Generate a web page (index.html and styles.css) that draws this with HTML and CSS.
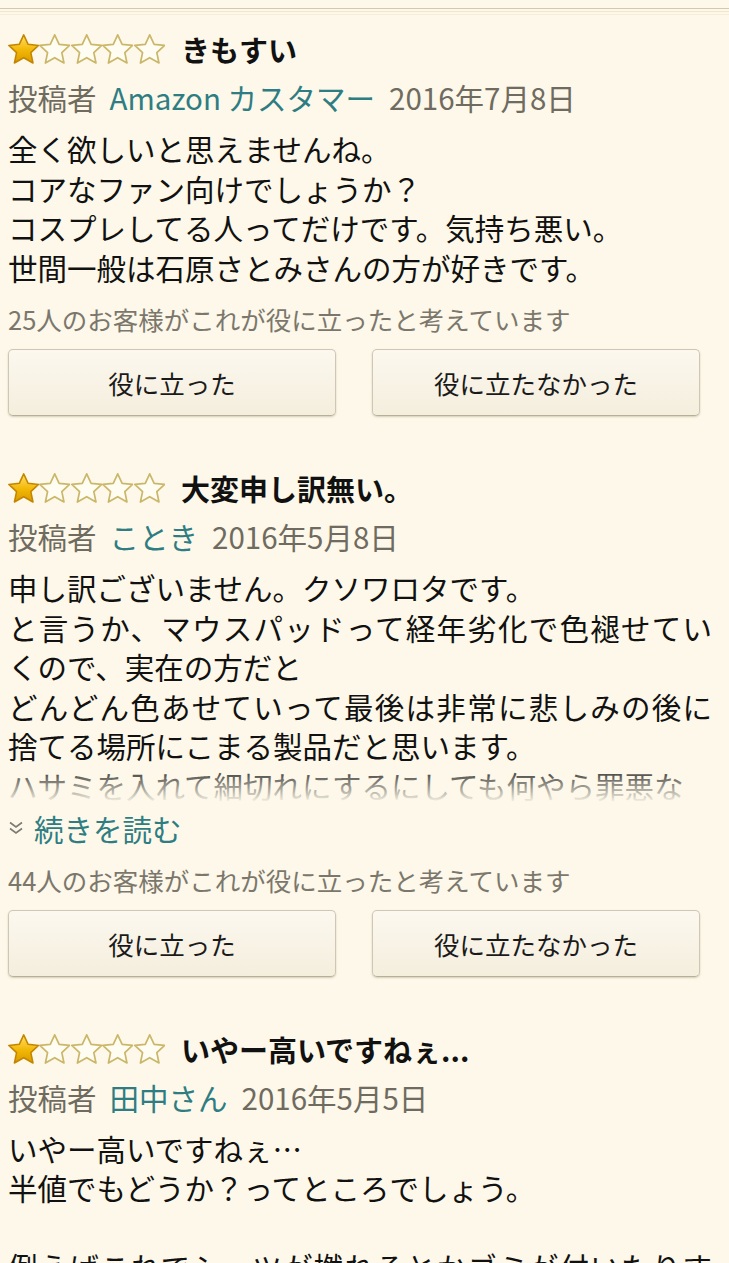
FILE: index.html
```html
<!DOCTYPE html>
<html lang="ja">
<head>
  <meta charset="UTF-8" />
  <meta name="viewport" content="width=device-width, initial-scale=1.0" />
  <title>カスタマーレビュー</title>
  <link rel="stylesheet" href="styles.css">
</head>
<body>
  <!-- star shapes used by every rating row -->
  <svg class="defs" width="0" height="0" aria-hidden="true">
    <defs>
      <linearGradient id="gold" x1="0" y1="0" x2="0" y2="1">
        <stop offset="0" stop-color="#ffe066" />
        <stop offset="0.55" stop-color="#f2b705" />
        <stop offset="1" stop-color="#d99a00" />
      </linearGradient>
      <symbol id="star-full" viewBox="1 1.1 22 20.8">
        <polygon points="12,1.6 15.1,8.2 22.4,9 17,14 18.5,21.3 12,17.6 5.5,21.3 7,14 1.6,9 8.9,8.2" fill="url(#gold)" stroke="#c48600" stroke-width="1.1" stroke-linejoin="round" />
      </symbol>
      <symbol id="star-empty" viewBox="1 1.1 22 20.8">
        <polygon points="12,1.6 15.1,8.2 22.4,9 17,14 18.5,21.3 12,17.6 5.5,21.3 7,14 1.6,9 8.9,8.2" fill="#fffcf2" stroke="#cbb769" stroke-width="1.2" stroke-linejoin="round" />
      </symbol>
    </defs>
  </svg>

  <div class="rule"></div>

  <div class="page">
    <!-- レビュー 1 -->
    <div class="review">
      <div class="title-row">
        <span class="stars">
          <svg><use href="#star-full" /></svg><svg><use href="#star-empty" /></svg><svg><use href="#star-empty" /></svg><svg><use href="#star-empty" /></svg><svg><use href="#star-empty" /></svg>
        </span>
        <span class="title">きもすい</span>
      </div>
      <div class="meta">投稿者<span class="author">Amazon カスタマー</span><span class="date">2016年7月8日</span></div>
      <p class="text">全く欲しいと思えませんね。<br>コアなファン向けでしょうか？<br>コスプレしてる人ってだけです。気持ち悪い。<br>世間一般は石原さとみさんの方が好きです。</p>
      <div class="helpful">25人のお客様がこれが役に立ったと考えています</div>
      <div class="votes">
        <button>役に立った</button>
        <button>役に立たなかった</button>
      </div>
    </div>

    <!-- レビュー 2 -->
    <div class="review">
      <div class="title-row">
        <span class="stars">
          <svg><use href="#star-full" /></svg><svg><use href="#star-empty" /></svg><svg><use href="#star-empty" /></svg><svg><use href="#star-empty" /></svg><svg><use href="#star-empty" /></svg>
        </span>
        <span class="title">大変申し訳無い。</span>
      </div>
      <div class="meta">投稿者<span class="author">ことき</span><span class="date">2016年5月8日</span></div>
      <p class="text clamped">申し訳ございません。クソワロタです。<br>と言うか、マウスパッドって経年劣化で色褪せていくので、実在の方だと<br>どんどん色あせていって最後は非常に悲しみの後に捨てる場所にこまる製品だと思います。<br>ハサミを入れて細切れにするにしても何やら罪悪な</p>
      <div class="more">
        <svg class="chevron" width="16" height="16" viewBox="0 0 16 16">
          <polyline points="2,2.5 8,7 14,2.5" />
          <polyline points="2,8.5 8,13 14,8.5" />
        </svg>
        <span>続きを読む</span>
      </div>
      <div class="helpful">44人のお客様がこれが役に立ったと考えています</div>
      <div class="votes">
        <button>役に立った</button>
        <button>役に立たなかった</button>
      </div>
    </div>

    <!-- レビュー 3 -->
    <div class="review">
      <div class="title-row">
        <span class="stars">
          <svg><use href="#star-full" /></svg><svg><use href="#star-empty" /></svg><svg><use href="#star-empty" /></svg><svg><use href="#star-empty" /></svg><svg><use href="#star-empty" /></svg>
        </span>
        <span class="title">いやー高いですねぇ...</span>
      </div>
      <div class="meta">投稿者<span class="author">田中さん</span><span class="date">2016年5月5日</span></div>
      <p class="text">いやー高いですねぇ…<br>半値でもどうか？ってところでしょう。<br><br>例えばこれでシーツが撚れるとかゴミが付いたりすると</p>
    </div>
  </div>
</body>
</html>
```

FILE: styles.css
```css
* {
  box-sizing: border-box;
}
body {
  margin: 0;
  background-color: #fdf8e9;
  color: #111;
  font-family: "Noto Sans CJK JP", "Noto Sans", sans-serif;
}
.defs {
  display: block;
  width: 0;
  height: 0;
  overflow: hidden;
}
.rule {
  margin-top: 8px;
  height: 7px;
  border-top: 1px solid #d3c8b0;
  background: linear-gradient(transparent 2px, #f1e6cd 2px, #f1e6cd 3px, transparent 3px, transparent 5px, #f6eeda 5px);
}
.page {
  padding: 0 17px 0 8px;
}
.review {
  padding-top: 48px;
}
.review:first-child {
  padding-top: 10px;
}
.title-row {
  display: flex;
  align-items: center;
  height: 48px;
}
.stars {
  display: flex;
  margin-right: 16px;
}
.stars svg {
  width: 31.4px;
  height: 30px;
}
.title {
  font-size: 29px;
  font-weight: bold;
  line-height: 48px;
}
.meta {
  font-size: 29.5px;
  line-height: 48px;
  color: #6f6b60;
}
.author {
  color: #2e7d83;
  margin: 0 14px 0 13px;
}
.text {
  margin: 8px 0 0;
  font-size: 29.5px;
  line-height: 39.5px;
  text-align: justify;
}
.clamped {
  position: relative;
  max-height: 237px;
  overflow: hidden;
}
.clamped::after {
  content: "";
  position: absolute;
  left: 0;
  right: 0;
  bottom: 0;
  height: 36px;
  background: linear-gradient(rgba(253, 248, 233, 0.15), rgba(253, 248, 233, 0.6) 50%, #fdf8e9 95%);
}
.more {
  margin-top: 3px;
  display: flex;
  align-items: center;
  height: 39.5px;
  font-size: 29.5px;
  color: #2e7d83;
}
.chevron {
  margin-right: 10px;
  fill: none;
  stroke: #7d7b72;
  stroke-width: 1.6;
}
.helpful {
  margin-top: 17px;
  font-size: 25.5px;
  line-height: 30px;
  color: #7b776c;
}
.votes {
  display: flex;
  gap: 36px;
  margin: 15px 12px 0 0;
}
.votes button {
  flex: 1;
  height: 67px;
  font-family: inherit;
  font-size: 25.5px;
  color: #1a1a1a;
  background: linear-gradient(#fcf8ef, #f4eedd);
  border: 1px solid #cfc7b3;
  border-bottom-color: #b8af9a;
  border-radius: 5px;
  box-shadow: 0 1px 2px rgba(90, 75, 40, 0.25);
}
```
